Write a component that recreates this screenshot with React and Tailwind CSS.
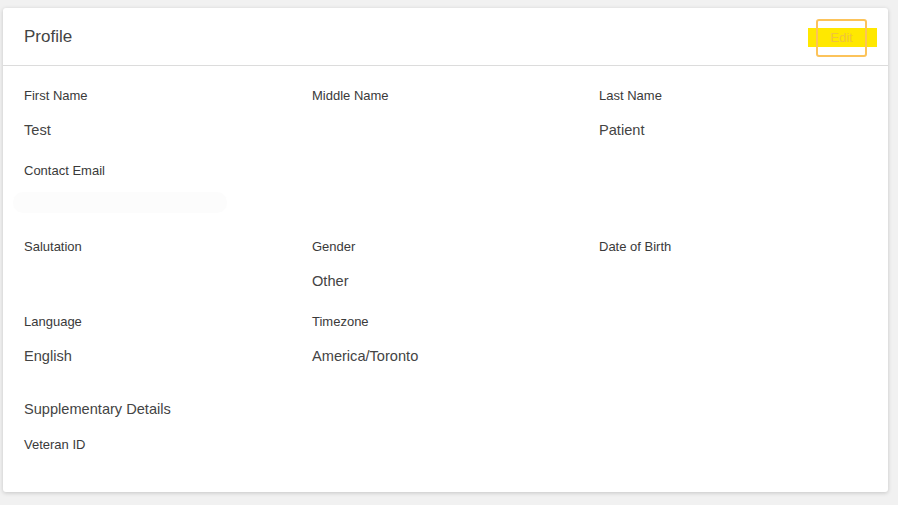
import React from "react";

function Field({ label, value }) {
  return (
    <div className="flex flex-col">
      <div className="h-[14px] text-[13px] leading-[14px] text-[#3a3a3a]">{label}</div>
      <div className="mt-[20px] h-[41px] text-[14.6px] leading-[14px] text-[#444]">{value}</div>
    </div>
  );
}

export default function App() {
  return (
    <div className="min-h-[505px] w-[898px] bg-[#f1f1f1] pl-[3px] pr-[10px] pt-[8px] pb-[13px] font-['Liberation_Sans',Arial,sans-serif]">
      <div className="w-[885px] h-[484px] rounded-[3px] bg-white shadow-[0_1px_4px_rgba(0,0,0,0.18)]">
        <div className="relative flex h-[58px] items-center justify-between border-b border-[#dcdcdc] pl-[21px] pr-[21px]">
          <div className="text-[17px] text-[#444]">Profile</div>
          <div className="relative mt-[2px] flex h-[38px] w-[51px] items-center justify-center">
            <div className="absolute left-[-8px] right-[-10px] top-[9px] h-[19px] bg-[#ffe800]" />
            <div className="absolute inset-0 rounded-[3px] border-2 border-[#fcc35a]" />
            <span className="relative text-[13px] text-[#f0c43a]">Edit</span>
          </div>
        </div>
        <div className="grid grid-cols-[288px_287px_1fr] pl-[21px] pt-[23px]">
          <Field label="First Name" value="Test" />
          <Field label="Middle Name" value="" />
          <Field label="Last Name" value="Patient" />
          <div className="relative col-span-3 flex flex-col">
            <div className="h-[14px] text-[13px] leading-[14px] text-[#3a3a3a]">Contact Email</div>
            <div className="mt-[14px] ml-[-11px] h-[21px] w-[214px] rounded-[10px] bg-[#fcfcfc]" />
            <div className="h-[27px]" />
          </div>
          <Field label="Salutation" value="" />
          <Field label="Gender" value="Other" />
          <Field label="Date of Birth" value="" />
          <Field label="Language" value="English" />
          <Field label="Timezone" value="America/Toronto" />
          <div />
          <div className="col-span-3 mt-[12px] text-[14.6px] leading-[14px] text-[#444]">Supplementary Details</div>
          <div className="col-span-3 mt-[22px] text-[13px] leading-[14px] text-[#3a3a3a]">Veteran ID</div>
        </div>
      </div>
    </div>
  );
}
